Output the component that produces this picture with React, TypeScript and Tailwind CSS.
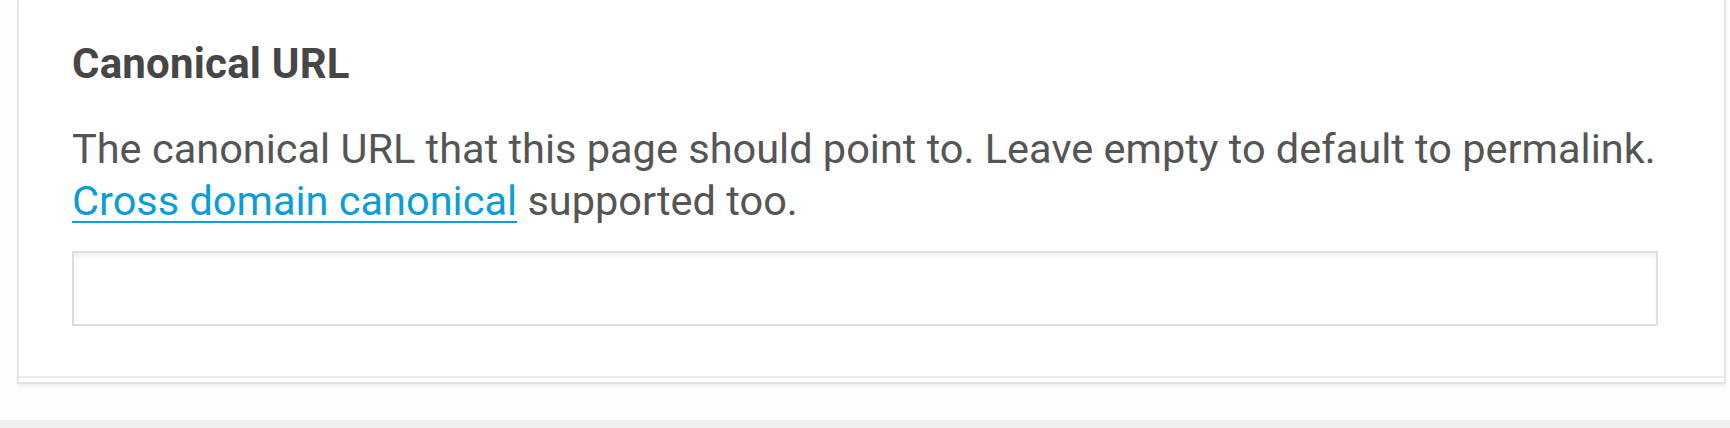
export default function App() {
  return (
    <div className="flex h-[428px] w-full flex-col bg-[#fdfdfd] font-['Roboto',sans-serif]">
      <div className="ml-[17px] mr-[4px] h-[384px] border-x-2 border-b-2 border-[#e4e4e4] bg-white shadow-[0_2px_3px_rgba(0,0,0,0.06)]">
        <div className="h-[378px] border-b-2 border-[#ececec] pl-[53px] pt-[43px]">
          <h2 className="text-[42px] font-bold leading-none tracking-[0.2px] text-[#464646]">Canonical URL</h2>

          <p className="mt-[38px] text-[41.5px] leading-[52px] text-[#555]">
            The canonical URL that this page should point to. Leave empty to default to permalink.
            <br />
            <a href="#" className="text-[#0a9dd8] underline decoration-2 underline-offset-[6px]">
              Cross domain canonical
            </a>{" "}
            supported too.
          </p>

          <input
            type="text"
            className="mt-[24px] block h-[75px] w-[1586px] border-2 border-[#dedede] bg-white shadow-[inset_0_3px_4px_rgba(0,0,0,0.06)] outline-none"
          />
        </div>
      </div>
      <div className="flex-1" />
      <div className="h-[8px] bg-[#efefef]" />
    </div>
  );
}
